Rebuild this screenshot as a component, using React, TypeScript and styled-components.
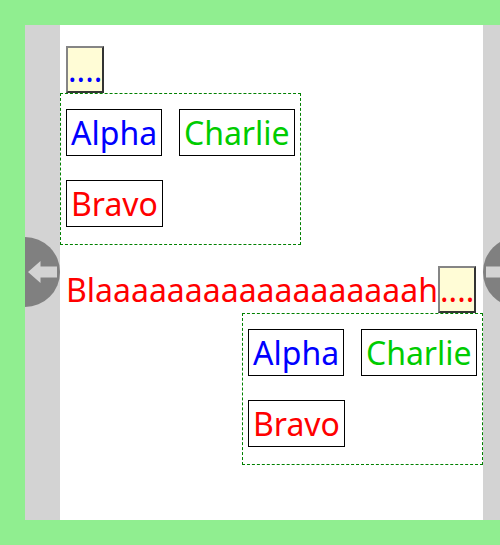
import React from "react";
import styled, { createGlobalStyle } from "styled-components";

const GlobalStyle = createGlobalStyle`
  html, body { margin: 0; background: lightgreen; overflow: hidden; }
  body { font-family: "Noto Sans", sans-serif; font-size: 32px; line-height: 45px; }
  * { box-sizing: border-box; }
`;

const Viewport = styled.div`
  width: 500px;
  height: 545px;
  padding: 25px 0 25px 25px;
  overflow: hidden;
`;

const Frame = styled.div`
  display: flex;
  width: 493px;
  height: 495px;
  background: white;
`;

const Rail = styled.div<{ $end?: boolean }>`
  flex: 0 0 35px;
  display: flex;
  justify-content: ${(p) => (p.$end ? "flex-end" : "flex-start")};
  padding-top: 212px;
  background: lightgray;
  overflow: hidden;
`;

const ArrowIcon = styled.svg`
  flex: none;
  display: block;
`;

const Page = styled.main`
  flex: 0 0 423px;
  display: flex;
  flex-direction: column;
  padding-top: 21px;
`;

const Line = styled.div<{ $gap?: number }>`
  display: flex;
  height: 47px;
  padding: 0 7px 0 6px;
  margin-top: ${(p) => p.$gap ?? 0}px;
  color: red;
  white-space: nowrap;
`;

const Filler = styled.span`
  flex: 1 1 0;
  min-width: 0;
  padding-top: 1px;
`;

const Blank = styled.button<{ $color: string }>`
  flex: none;
  width: 38px;
  height: 47px;
  padding: 0;
  border: 2px solid;
  border-color: #858585 #333 #333 #858585;
  background: #fffcd6;
  color: ${(p) => p.$color};
  font: inherit;
  line-height: 43px;
`;

const Choices = styled.div<{ $end?: boolean }>`
  align-self: ${(p) => (p.$end ? "flex-end" : "flex-start")};
  display: flex;
  flex-wrap: wrap;
  align-content: flex-start;
  gap: 24px 16.8px;
  width: 241px;
  height: 152px;
  padding: 15px 5px;
  border: 1px dashed green;
`;

const Choice = styled.div<{ $color: string }>`
  height: 47px;
  padding: 0 4px;
  border: 1px solid black;
  color: ${(p) => p.$color};
`;

const options = [
  { label: "Alpha", color: "blue" },
  { label: "Charlie", color: "#00cc00" },
  { label: "Bravo", color: "red" },
];

function Arrow({ right }: { right?: boolean }) {
  return (
    <ArrowIcon width="70" height="70" viewBox="0 0 70 70">
      <circle cx="35" cy="35" r="35" fill="gray" />
      <path
        d={right ? "M3 29.5h16.5v-5.5L32 35 19.5 46v-5.5H3z" : "M67 29.5H50.5v-5.5L38 35l12.5 11v-5.5H67z"}
        fill="lightgray"
      />
    </ArrowIcon>
  );
}

function ChoiceList({ end }: { end?: boolean }) {
  return (
    <Choices $end={end}>
      {options.map((o) => (
        <Choice key={o.label} $color={o.color}>{o.label}</Choice>
      ))}
    </Choices>
  );
}

export default function App() {
  return (
    <>
      <GlobalStyle />
      <Viewport>
        <Frame>
          <Rail $end><Arrow /></Rail>
          <Page>
            <Line><Blank $color="blue">....</Blank></Line>
            <ChoiceList />
            <Line $gap={21}>
              <Filler>Blaaaaaaaaaaaaaaaaaah</Filler>
              <Blank $color="red">....</Blank>
            </Line>
            <ChoiceList end />
          </Page>
          <Rail><Arrow right /></Rail>
        </Frame>
      </Viewport>
    </>
  );
}
